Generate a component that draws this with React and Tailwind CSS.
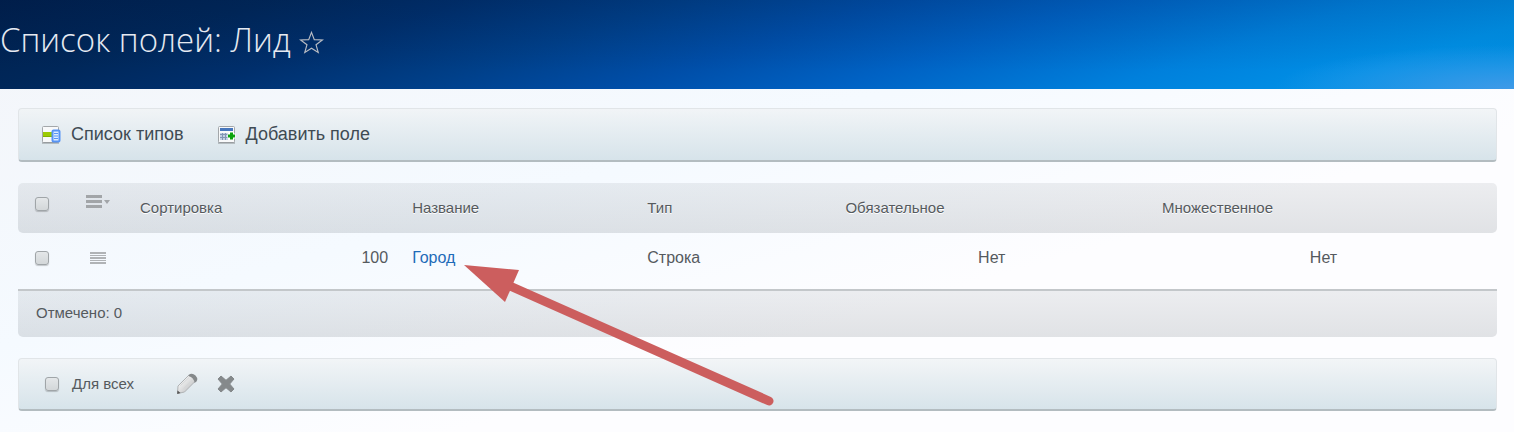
import { useState } from 'react';

const fields = [
    { id: 1, sort: 100, name: 'Город', type: 'Строка', required: 'Нет', multiple: 'Нет' },
];

const panel =
    'flex items-center rounded-[4px] border border-[#e1e5e8] border-b-2 border-b-[#b3bcc0] bg-gradient-to-b from-[#f0f3f5]/80 to-[#d3e1e8]/90';

function Checkbox({ label, ...props }) {
    return (
        <input
            type="checkbox"
            aria-label={label}
            className="block size-[14px] appearance-none rounded-[3px] border border-[#a0a5a8] bg-gradient-to-b from-[#e4e7e9] to-[#d3d7d9] shadow-[0_1px_1px_rgba(0,0,0,0.2)] checked:bg-[#7f9db0]"
            {...props}
        />
    );
}

function StarIcon() {
    return (
        <svg width="25" height="25" viewBox="0 0 26 25" fill="none" stroke="#b9bdc4" strokeWidth="1.2">
            <path d="M13 2 L15.9 9.5 L24.3 9.8 L17.7 14.8 L20 22.8 L13 18.5 L6 22.8 L8.3 14.8 L1.7 9.8 L10.1 9.5 Z" />
        </svg>
    );
}

function TypesIcon() {
    return (
        <svg width="20" height="18" viewBox="0 0 20 18">
            <rect x="1.5" y="0.5" width="16" height="16" rx="1" fill="#f8f9fa" stroke="#a3a7aa" />
            <path d="M1 17h17" stroke="#8c9194" />
            <rect x="2" y="6" width="10" height="5" fill="#9ccb05" />
            <path d="M2 10.5h10" stroke="#82b000" />
            <rect x="11.5" y="4.5" width="7" height="11" rx="1" fill="#dcebff" stroke="#5794f5" strokeWidth="2" />
            <path d="M13 7.5h4M13 10h4M13 12.5h4" stroke="#5794f5" />
        </svg>
    );
}

function AddFieldIcon() {
    return (
        <svg width="18" height="18" viewBox="0 0 18 18">
            <rect x="0.5" y="0.5" width="16" height="16" rx="1" fill="#f8f9fa" stroke="#a3a7aa" />
            <path d="M0 17h17" stroke="#8c9194" />
            <rect x="2" y="2" width="13" height="3" fill="#4777bd" />
            <rect x="2" y="7" width="8" height="7" fill="#c3d0e3" />
            <path d="M2 8.5h8M2 11.5h8M4.5 7v7M7.5 7v7" stroke="#8295b5" />
            <path d="M13.5 6v8M9.5 10h8" stroke="#fff" strokeWidth="5" />
            <path d="M13.5 6.5v7M10 10h7" stroke="#0ba30d" strokeWidth="3" />
        </svg>
    );
}

function PencilIcon() {
    return (
        <svg width="22" height="22" viewBox="0 0 22 22">
            <defs>
                <linearGradient id="pencil" x1="0" y1="0" x2="1" y2="1">
                    <stop offset="0.2" stopColor="#f8f8f8" />
                    <stop offset="1" stopColor="#b0b2b3" />
                </linearGradient>
            </defs>
            <path d="M2 13 L12.5 2.5 Q18 3 19 8.5 L8.5 19 L1.5 20.5 Z" fill="url(#pencil)" stroke="#b0b3b5" />
            <path d="M12.5 2 Q16 -0.5 19.5 2.5 Q22.5 6 20.5 8.5 L18.5 10 Q18 4.5 12.5 3 Z" fill="#85898b" />
            <path d="M4.5 12.5 L13 4.5 M7.5 15.5 L16 7.5" stroke="#d5d7d8" />
            <path d="M1.5 17.5 L4.5 20 L1.2 21 Z" fill="#555" />
        </svg>
    );
}

function CrossIcon() {
    return (
        <svg width="18" height="18" viewBox="0 0 18 18">
            <path
                d="M4 1 L9 5.3 L14 1 L17 4 L12.7 9 L17 14 L14 17 L9 12.7 L4 17 L1 14 L5.3 9 L1 4 Z"
                fill="#85898b"
                stroke="#85898b"
                strokeWidth="1"
                strokeLinejoin="round"
            />
        </svg>
    );
}

function ColumnsIcon() {
    return (
        <svg width="25" height="14" viewBox="0 0 25 14" fill="#a2a5a8">
            <path d="M0 0h16v3H0zM0 5h16v3H0zM0 10h16v3H0zM18 5h6l-3 4z" />
        </svg>
    );
}

function RowMenuIcon() {
    return (
        <svg width="16" height="12" viewBox="0 0 16 12" fill="#b0b3b6">
            <path d="M0 0h16v2H0zM0 3h16v1H0zM0 5h16v2H0zM0 8h16v1H0zM0 10h16v2H0z" />
        </svg>
    );
}

function Arrow() {
    return (
        <svg
            className="pointer-events-none absolute top-[19px] left-[52px] z-10"
            width="312"
            height="142"
            viewBox="464 265 312 142"
            fill="none"
        >
            <path d="M510 286 L769 401" stroke="#cc5e5e" strokeWidth="9" strokeLinecap="round" />
            <path d="M464 265 L519 270 L505 302 Z" fill="#cc5e5e" />
        </svg>
    );
}

export default function App() {
    const [selected, setSelected] = useState([]);
    const [forAll, setForAll] = useState(false);

    const toggle = (id) => {
        setSelected(selected.includes(id) ? selected.filter((s) => s !== id) : [...selected, id]);
    };

    const toggleAll = () => {
        setSelected(selected.length === fields.length ? [] : fields.map((f) => f.id));
    };

    return (
        <div className="min-h-screen bg-gradient-to-br from-[#f3f5f9] via-[#f5faff] via-40% to-[#fdfdff] to-65% font-['Liberation_Sans',Arial,sans-serif] text-[#555a5e]">
            <header className="flex h-[89px] items-center gap-2 bg-[radial-gradient(ellipse_240px_44px_at_100%_100%,#3f9ae8,transparent),linear-gradient(180deg,rgba(0,20,60,0.12),transparent_80%),linear-gradient(162deg,#001f4c_0%,#002759_15%,#002f6c_26%,#003f88_38%,#004ea8_50%,#0062c4_62%,#0080dc_77%,#0090e6_89%,#0092e4_100%)] pb-[10px]">
                <h1 className="font-['Open_Sans',sans-serif] text-[33px] leading-10 font-light text-[#e6eaf1]">
                    Список полей: Лид
                </h1>
                <button type="button" aria-label="В избранное" className="mt-[6px]">
                    <StarIcon />
                </button>
            </header>

            <main className="flex flex-col gap-[21px] py-[19px] pr-[17px] pl-[18px]">
                <nav className={`${panel} h-[54px] gap-[34px] px-[22px] text-[18px] text-[#3f4b54]`}>
                    <a href="#types" className="flex items-center gap-[10px]">
                        <TypesIcon />
                        Список типов
                    </a>
                    <a href="#add" className="flex items-center gap-[10px]">
                        <AddFieldIcon />
                        Добавить поле
                    </a>
                </nav>

                <section>
                    <table className="w-full table-fixed border-separate border-spacing-0">
                        <colgroup>
                            <col className="w-12" />
                            <col className="w-[62px]" />
                            <col className="w-[18.4%]" />
                            <col className="w-[15.9%]" />
                            <col className="w-[13.4%]" />
                            <col className="w-[21.4%]" />
                            <col />
                        </colgroup>
                        <thead>
                            <tr className="h-[50px] bg-gradient-to-b from-[#555f68]/10 to-[#555f68]/17 text-left text-[15px] [text-shadow:0_1px_0_#fff]">
                                <th className="rounded-l-[5px] pb-2 pl-[17px]">
                                    <Checkbox
                                        label="Выбрать все"
                                        checked={selected.length === fields.length}
                                        onChange={toggleAll}
                                    />
                                </th>
                                <th className="pb-3 pl-5">
                                    <button type="button" aria-label="Настройка колонок" className="block">
                                        <ColumnsIcon />
                                    </button>
                                </th>
                                <th className="px-3 font-normal">Сортировка</th>
                                <th className="px-3 font-normal">Название</th>
                                <th className="px-3 font-normal">Тип</th>
                                <th className="px-3 font-normal">Обязательное</th>
                                <th className="rounded-r-[5px] px-3 font-normal">Множественное</th>
                            </tr>
                        </thead>
                        <tbody>
                            {fields.map((field) => (
                                <tr key={field.id} className="h-14 text-[16px]">
                                    <td className="pb-[6px] pl-[17px]">
                                        <Checkbox
                                            label={field.name}
                                            checked={selected.includes(field.id)}
                                            onChange={() => toggle(field.id)}
                                        />
                                    </td>
                                    <td className="pb-[6px] pl-6">
                                        <button type="button" aria-label="Действия" className="block">
                                            <RowMenuIcon />
                                        </button>
                                    </td>
                                    <td className="px-3 pb-[6px] text-right">{field.sort}</td>
                                    <td className="px-3 pb-[6px]">
                                        <span className="relative inline-block">
                                            <a href="#field" className="text-[#1e6bb8]">
                                                {field.name}
                                            </a>
                                            <Arrow />
                                        </span>
                                    </td>
                                    <td className="px-3 pb-[6px]">{field.type}</td>
                                    <td className="px-3 pb-[6px] text-center">{field.required}</td>
                                    <td className="px-3 pb-[6px] text-center">{field.multiple}</td>
                                </tr>
                            ))}
                        </tbody>
                    </table>
                    <div className="flex h-12 items-center rounded-b-[5px] border-t-2 border-[#c3c7ca] bg-gradient-to-b from-[#555f68]/10 to-[#555f68]/17 px-[18px] pb-px text-[15px]">
                        Отмечено: {selected.length}
                    </div>
                </section>

                <div className={`${panel} h-[53px] px-[26px] text-[15px]`}>
                    <label className="flex items-center gap-[13px]">
                        <Checkbox checked={forAll} onChange={(e) => setForAll(e.target.checked)} />
                        Для всех
                    </label>
                    <button type="button" aria-label="Изменить" className="ml-[42px]">
                        <PencilIcon />
                    </button>
                    <button type="button" aria-label="Удалить" className="ml-[19px]">
                        <CrossIcon />
                    </button>
                </div>
            </main>
        </div>
    );
}
